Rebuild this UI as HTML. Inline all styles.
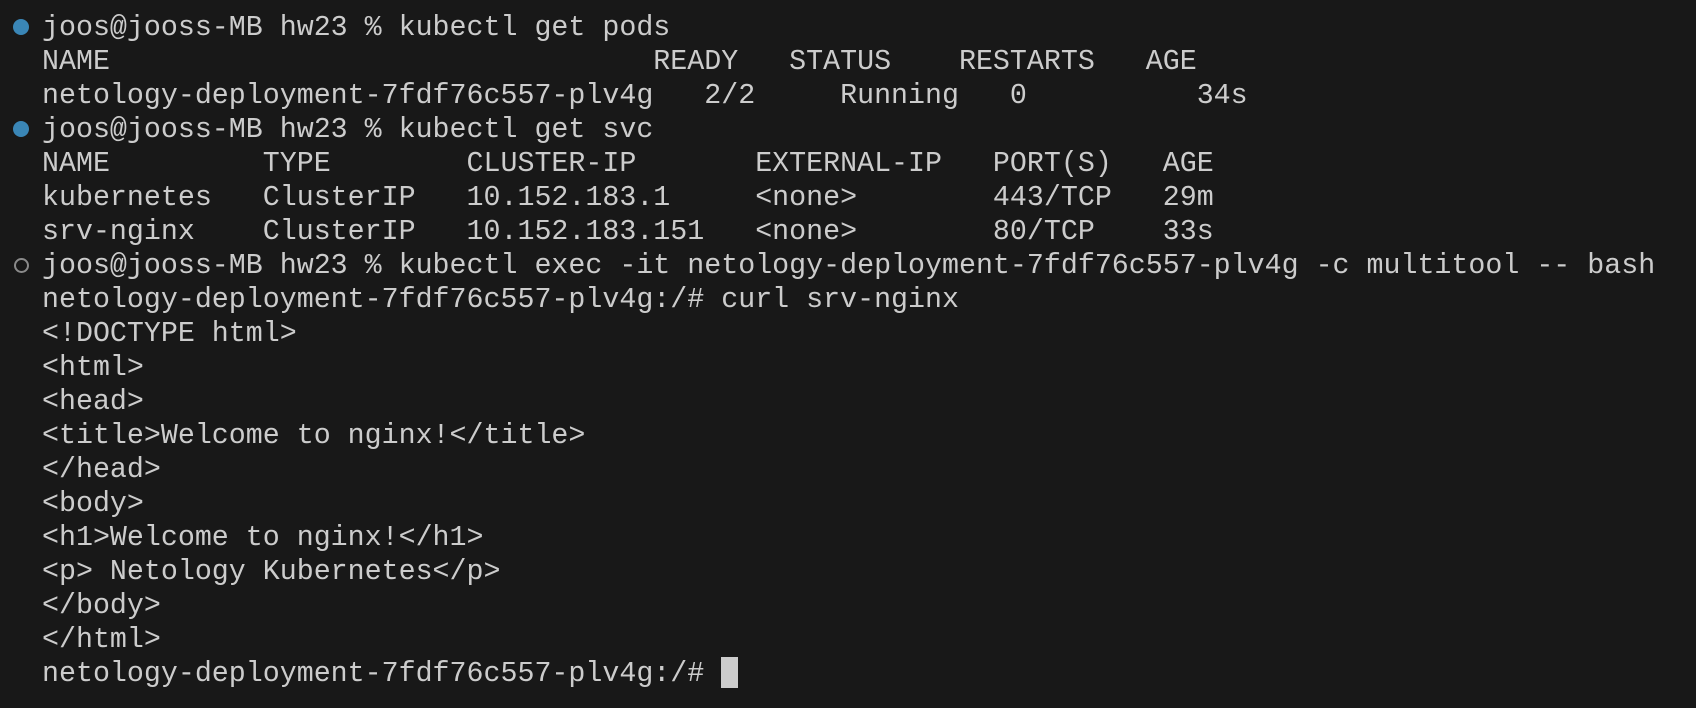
<!DOCTYPE html>
<html><head><style>
html,body{margin:0;padding:0;background:#181818;width:1696px;height:708px;overflow:hidden}
pre{margin:0;position:absolute;left:42px;top:11px;font-family:"Liberation Mono",monospace;font-size:28.3px;line-height:34px;color:#cccccc;white-space:pre}
.dot{position:absolute;left:13px;width:16px;height:16px;border-radius:50%;background:#3a86b6}
.odot{position:absolute;left:14px;width:11px;height:11px;border-radius:50%;border:2px solid #8a8a8a}
.cur{display:inline-block;width:17px;height:31px;background:#cccccc;vertical-align:-7px}
</style></head><body>
<div class="dot" style="top:19px"></div>
<div class="dot" style="top:121px"></div>
<div class="odot" style="top:258px"></div>
<pre>joos@jooss-MB hw23 % kubectl get pods
NAME                                READY   STATUS    RESTARTS   AGE
netology-deployment-7fdf76c557-plv4g   2/2     Running   0          34s
joos@jooss-MB hw23 % kubectl get svc
NAME         TYPE        CLUSTER-IP       EXTERNAL-IP   PORT(S)   AGE
kubernetes   ClusterIP   10.152.183.1     &lt;none&gt;        443/TCP   29m
srv-nginx    ClusterIP   10.152.183.151   &lt;none&gt;        80/TCP    33s
joos@jooss-MB hw23 % kubectl exec -it netology-deployment-7fdf76c557-plv4g -c multitool -- bash
netology-deployment-7fdf76c557-plv4g:/# curl srv-nginx
&lt;!DOCTYPE html&gt;
&lt;html&gt;
&lt;head&gt;
&lt;title&gt;Welcome to nginx!&lt;/title&gt;
&lt;/head&gt;
&lt;body&gt;
&lt;h1&gt;Welcome to nginx!&lt;/h1&gt;
&lt;p&gt; Netology Kubernetes&lt;/p&gt;
&lt;/body&gt;
&lt;/html&gt;
netology-deployment-7fdf76c557-plv4g:/# <span class="cur"></span></pre>
</body></html>
